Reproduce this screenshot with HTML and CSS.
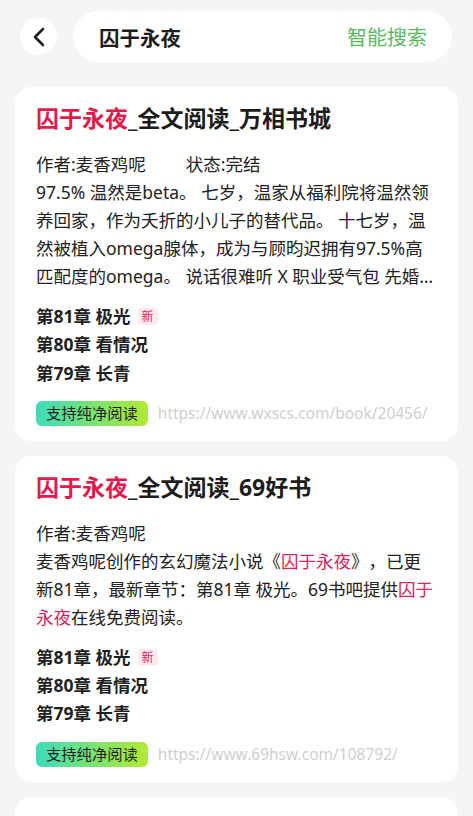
FILE: index.html
```html
<!DOCTYPE html>
<html lang="zh-CN">
<head>
  <meta charset="UTF-8">
  <title>囚于永夜 - 搜索</title>
  <link rel="stylesheet" href="styles.css">
</head>
<body>
  <div class="topbar">
    <button class="back-btn" aria-label="返回">
      <svg width="14" height="20" viewBox="0 0 14 20"><path d="M11 2 L3 10 L11 18" fill="none" stroke="#1f1f1f" stroke-width="2.6" stroke-linecap="round" stroke-linejoin="round"/></svg>
    </button>
    <div class="search-box">
      <span class="query">囚于永夜</span>
      <span class="smart">智能搜索</span>
    </div>
  </div>

  <div class="results">
    <div class="card">
      <h2 class="title"><em>囚于永夜</em>_全文阅读_万相书城</h2>
      <div class="meta"><span>作者:麦香鸡呢</span><span>状态:完结</span></div>
      <p class="desc clamp">97.5% 温然是beta。 七岁，温家从福利院将温然领养回家，作为夭折的小儿子的替代品。 十七岁，温然被植入omega腺体，成为与顾昀迟拥有97.5%高匹配度的omega。 说话很难听 X 职业受气包 先婚后爱，破镜重圆</p>
      <ul class="chapters">
        <li>第81章 极光<span class="new">新</span></li>
        <li>第80章 看情况</li>
        <li>第79章 长青</li>
      </ul>
      <div class="source">
        <span class="pure">支持纯净阅读</span>
        <span class="url">https://www.wxscs.com/book/20456/</span>
      </div>
    </div>

    <div class="card">
      <h2 class="title"><em>囚于永夜</em>_全文阅读_69好书</h2>
      <div class="meta"><span>作者:麦香鸡呢</span></div>
      <p class="desc">麦香鸡呢创作的玄幻魔法小说《<em>囚于永夜</em>》，已更新81章，最新章节：第81章 极光。69书吧提供<em>囚于永夜</em>在线免费阅读。</p>
      <ul class="chapters">
        <li>第81章 极光<span class="new">新</span></li>
        <li>第80章 看情况</li>
        <li>第79章 长青</li>
      </ul>
      <div class="source">
        <span class="pure">支持纯净阅读</span>
        <span class="url">https://www.69hsw.com/108792/</span>
      </div>
    </div>

    <div class="card">
      <h2 class="title"><em>囚于永夜</em>_最新章节_笔趣阁</h2>
      <div class="meta"><span>作者:麦香鸡呢</span></div>
    </div>
  </div>
</body>
</html>
```

FILE: styles.css
```css
* { box-sizing: border-box; }
body { margin: 0; background: #f4f5f7; color: #222; font-family: "Noto Sans", "Noto Sans CJK SC", sans-serif; text-spacing-trim: space-all; }
em { font-style: normal; color: #e3194b; }

.topbar { display: flex; align-items: center; gap: 16px; padding: 11px 21px 0 20px; }
.back-btn { width: 37px; height: 37px; border: none; border-radius: 50%; background: #fff; display: flex; align-items: center; justify-content: center; padding: 0; flex-shrink: 0; }
.search-box { flex: 1; height: 51px; border-radius: 26px; background: #fff; display: flex; align-items: center; justify-content: space-between; padding: 0 25px 0 26px; }
.query { font-size: 20.5px; font-weight: 700; color: #1c1c1c; }
.smart { font-size: 20px; color: #5cb85f; }

.results { padding: 25px 15px 0; display: flex; flex-direction: column; gap: 15px; }
.card { background: #fff; border-radius: 16px; padding: 16px 21px 15px; }
.title { margin: 0 0 17px; font-size: 23px; line-height: 30px; font-weight: 700; color: #1c1c1c; }
.title em { color: #e3194b; }
.meta { display: flex; gap: 40px; font-size: 17.5px; line-height: 28px; color: #222; }
.desc { margin: 0; font-size: 17.5px; line-height: 28px; color: #222; }
.desc em { color: #d8245a; }
.clamp { display: -webkit-box; -webkit-line-clamp: 4; -webkit-box-orient: vertical; overflow: hidden; }
.chapters { list-style: none; margin: 12px 0 0; padding: 0; font-size: 17.5px; line-height: 28.3px; font-weight: 700; color: #1f1f1f; }
.new { display: inline-block; margin-left: 7px; padding: 0 4px; font-size: 12px; line-height: 17px; font-weight: 400; color: #e0245e; background: #fdeaf0; border-radius: 3px; vertical-align: 2px; }
.source { display: flex; align-items: center; gap: 10px; margin-top: 14px; }
.pure { height: 25px; line-height: 25px; padding: 0 10px; border-radius: 6px; font-size: 15.3px; color: #1f1f1f; background: linear-gradient(90deg, #3ddcb8, #b2e932); }
.url { font-size: 15.5px; color: #cfcfcf; }
```
